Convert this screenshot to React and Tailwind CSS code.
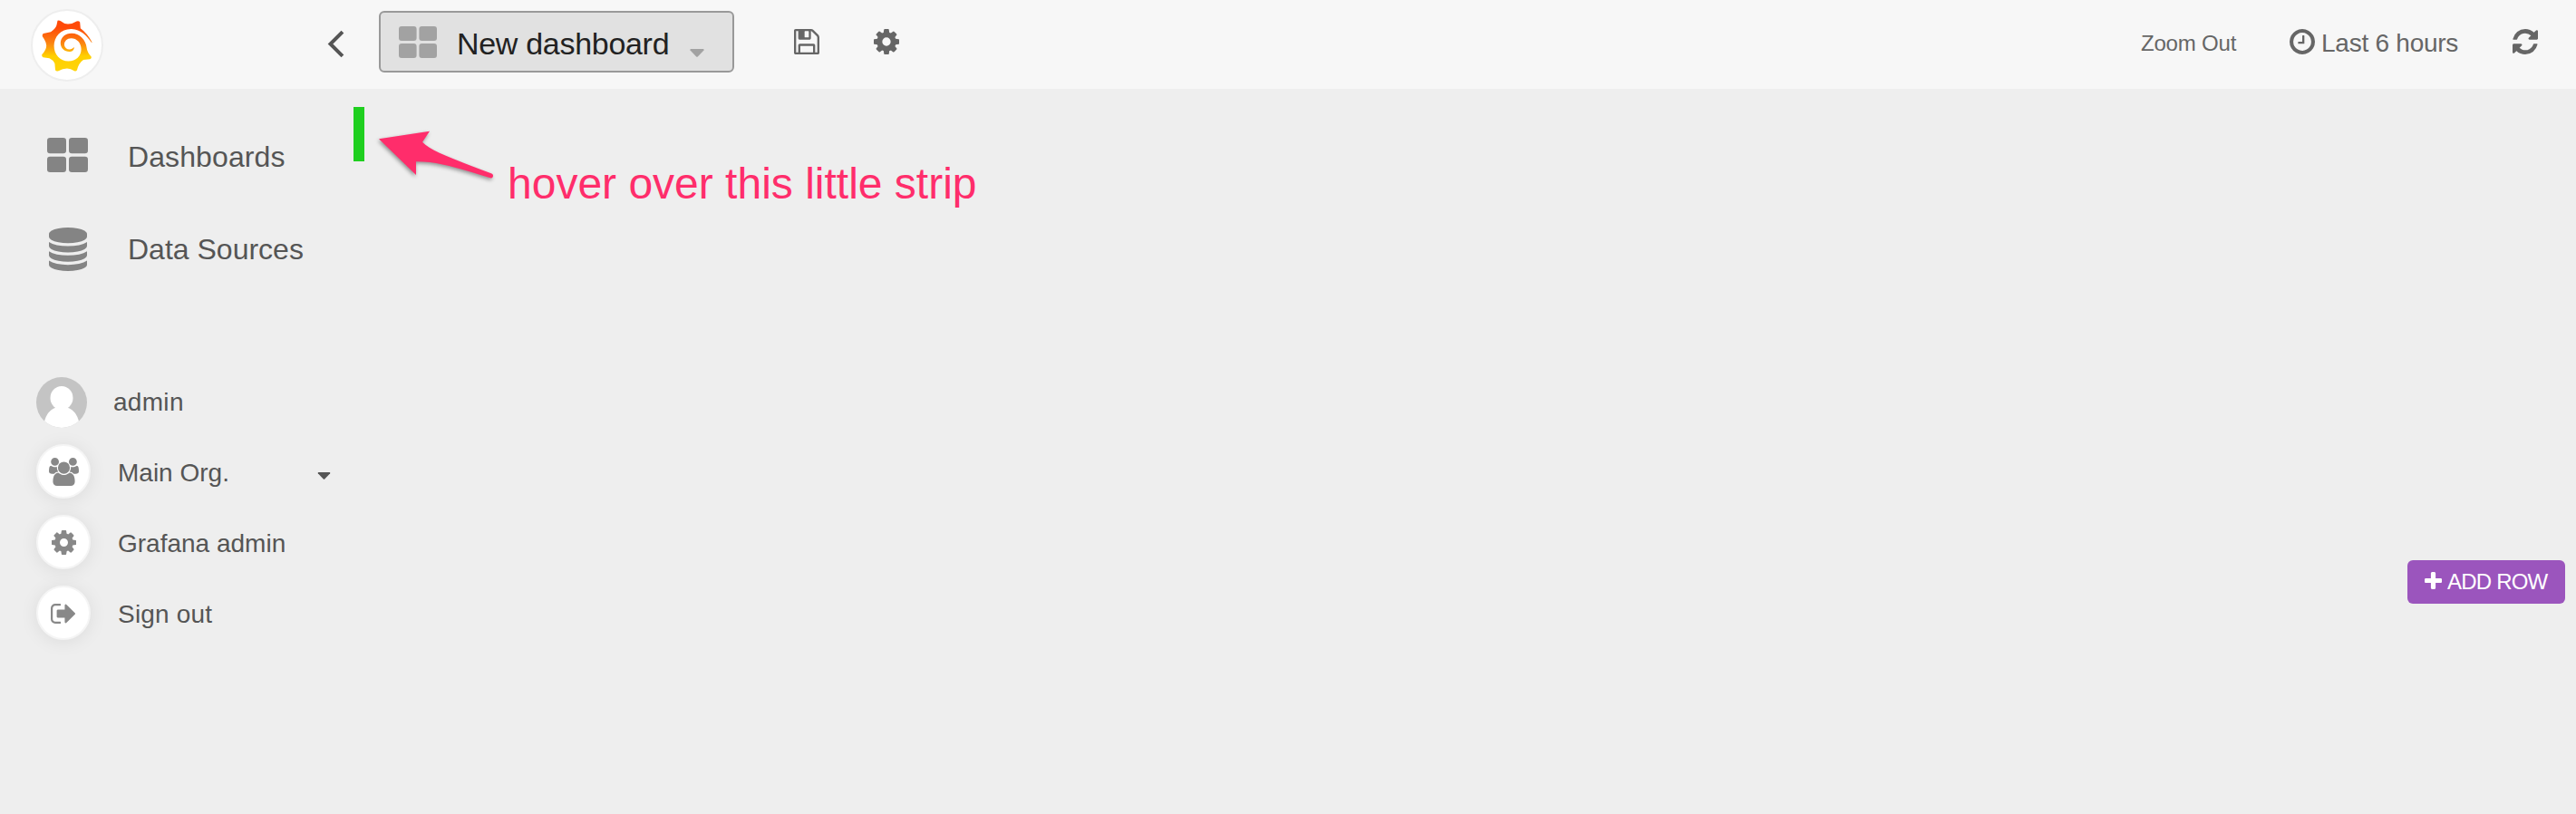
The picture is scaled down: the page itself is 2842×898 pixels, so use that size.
const COG =
  "M1152 896q0-106-75-181t-181-75-181 75-75 181 75 181 181 75 181-75 75-181zm512-109v222q0 12-8 23t-20 13l-185 28q-19 54-39 91 35 50 107 138 10 12 10 25t-9 23q-27 37-99 108t-94 71q-12 0-26-9l-138-108q-44 23-91 38-16 136-29 186-7 28-36 28h-222q-14 0-24.5-8.5t-11.5-21.5l-28-184q-49-16-90-37l-141 107q-10 9-25 9-14 0-25-11-126-114-165-168-7-10-7-23 0-12 8-23 15-21 51-66.5t54-70.5q-27-50-41-99l-183-27q-13-2-21-12.5t-8-23.5v-222q0-12 8-23t19-13l186-28q14-46 39-92-40-57-107-138-10-12-10-24 0-10 9-23 26-36 98.5-107.5t94.5-71.5q13 0 26 10l138 107q44-23 91-38 16-136 29-186 7-28 36-28h222q14 0 24.5 8.5t11.5 21.5l28 184q49 16 90 37l142-107q9-9 24-9 13 0 25 10 129 119 165 170 7 8 7 22 0 12-8 23-15 21-51 66.5t-54 70.5q26 50 41 98l183 28q13 2 21 12.5t8 23.5z";
const FLOPPY =
  "M512 1536h768v-384h-768v384zm896 0h128v-896q0-14-10-38.5t-20-34.5l-281-281q-10-10-34-20t-39-10v416q0 40-28 68t-68 28h-576q-40 0-68-28t-28-68v-416h-128v1280h128v-416q0-40 28-68t68-28h832q40 0 68 28t28 68v416zm-384-928v-320q0-13-9.5-22.5t-22.5-9.5h-192q-13 0-22.5 9.5t-9.5 22.5v320q0 13 9.5 22.5t22.5 9.5h192q13 0 22.5-9.5t9.5-22.5zm640 32v928q0 40-28 68t-68 28h-1344q-40 0-68-28t-28-68v-1344q0-40 28-68t68-28h928q40 0 88 20t76 48l280 280q28 28 48 76t20 88z";
const CLOCK =
  "M1024 544v448q0 14-9 23t-23 9h-320q-14 0-23-9t-9-23v-64q0-14 9-23t23-9h224v-352q0-14 9-23t23-9h64q14 0 23 9t9 23zm416 352q0-148-73-273t-198-198-273-73-273 73-198 198-73 273 73 273 198 198 273 73 273-73 198-198 73-273zm224 0q0 209-103 385.5t-279.5 279.5-385.5 103-385.5-103-279.5-279.5-103-385.5 103-385.5 279.5-279.5 385.5-103 385.5 103 279.5 279.5 103 385.5z";
const REFRESH =
  "M1639 1056q0 5-1 7-64 268-268 434.5t-478 166.5q-146 0-282.5-55t-243.5-157l-129 129q-19 19-45 19t-45-19-19-45v-448q0-26 19-45t45-19h448q26 0 45 19t19 45-19 45l-137 137q71 66 161 102t187 36q134 0 250-65t186-179q11-17 53-117 8-23 30-23h192q13 0 22.5 9.5t9.5 22.5zm25-800v448q0 26-19 45t-45 19h-448q-26 0-45-19t-19-45 19-45l138-138q-148-137-349-137-134 0-250 65t-186 179q-11 17-53 117-8 23-30 23h-199q-13 0-22.5-9.5t-9.5-22.5v-7q65-268 270-434.5t480-166.5q146 0 284 55.5t245 156.5l130-129q19-19 45-19t45 19 19 45z";
const SIGN_OUT =
  "M704 1440q0 4 1 20t.5 26.5-3 23.5-10 19.5-20.5 6.5h-320q-119 0-203.5-84.5t-84.5-203.5v-704q0-119 84.5-203.5t203.5-84.5h320q13 0 22.5 9.5t9.5 22.5q0 4 1 20t.5 26.5-3 23.5-10 19.5-20.5 6.5h-320q-66 0-113 47t-47 113v704q0 66 47 113t113 47h312l11.5 1 11.5 3 8 5.5 7 9 2 13.5zm928-544q0 26-19 45l-544 544q-19 19-45 19t-45-19-19-45v-288h-448q-26 0-45-19t-19-45v-384q0-26 19-45t45-19h448v-288q0-26 19-45t45-19 45 19l544 544q19 19 19 45z";
const PLUS =
  "M1600 736v192q0 40-28 68t-68 28h-416v416q0 40-28 68t-68 28h-192q-40 0-68-28t-28-68v-416h-416q-40 0-68-28t-28-68v-192q0-40 28-68t68-28h416v-416q0-40 28-68t68-28h192q40 0 68 28t28 68v416h416q40 0 68 28t28 68z";
const DATABASE =
  "M896 768q237 0 443-43t325-127v170q0 69-103 128t-280 93.5-385 34.5-385-34.5-280-93.5-103-128v-170q119 84 325 127t443 43zm0 768q237 0 443-43t325-127v170q0 69-103 128t-280 93.5-385 34.5-385-34.5-280-93.5-103-128v-170q119 84 325 127t443 43zm0-384q237 0 443-43t325-127v170q0 69-103 128t-280 93.5-385 34.5-385-34.5-280-93.5-103-128v-170q119 84 325 127t443 43zm0-1152q208 0 385 34.5t280 93.5 103 128v128q0 69-103 128t-280 93.5-385 34.5-385-34.5-280-93.5-103-128v-128q0-69 103-128t280-93.5 385-34.5z";
const USERS =
  "M657 896q-162 5-265 128h-134q-82 0-138-40.5t-56-118.5q0-353 124-353 6 0 43.5 21t97.5 42.5 119 21.5q67 0 133-23-5 37-5 66 0 139 81 256zm1071 637q0 120-73 189.5t-194 69.5h-874q-121 0-194-69.5t-73-189.5q0-53 3.5-103.5t14-109 26.5-108.5 43-97.5 62-81 85.5-53.5 111.5-20q10 0 43 21.5t73 48 107 48 135 21.5 135-21.5 107-48 73-48 43-21.5q61 0 111.5 20t85.5 53.5 62 81 43 97.5 26.5 108.5 14 109 3.5 103.5zm-1024-1277q0 106-75 181t-181 75-181-75-75-181 75-181 181-75 181 75 75 181zm704 384q0 159-112.5 271.5t-271.5 112.5-271.5-112.5-112.5-271.5 112.5-271.5 271.5-112.5 271.5 112.5 112.5 271.5zm576 225q0 78-56 118.5t-138 40.5h-134q-103-123-265-128 81-117 81-256 0-29-5-66 66 23 133 23 59 0 119-21.5t97.5-42.5 43.5-21q124 0 124 353zm-128-609q0 106-75 181t-181 75-181-75-75-181 75-181 181-75 181 75 75 181z";

function Icon({ d, box = "128 128 1536 1536", className }) {
  return (
    <svg viewBox={box} preserveAspectRatio="none" fill="currentColor" className={"shrink-0 " + className}>
      <path d={d} />
    </svg>
  );
}

function Tiles({ className }) {
  return (
    <svg viewBox="0 0 45 38" preserveAspectRatio="none" fill="currentColor" className={"shrink-0 " + className}>
      <rect x="0" y="0" width="21" height="17.3" rx="3.2" />
      <rect x="24" y="0" width="21" height="17.3" rx="3.2" />
      <rect x="0" y="20.7" width="21" height="17.3" rx="3.2" />
      <rect x="24" y="20.7" width="21" height="17.3" rx="3.2" />
    </svg>
  );
}

function Logo() {
  return (
    <div className="flex size-[80px] shrink-0 items-center justify-center rounded-full border-2 border-[#eeeeee] bg-white">
      <svg viewBox="0 0 56 57" className="h-[57px] w-[56px]" fill="none">
        <defs>
          <linearGradient id="flame" x1="0" y1="0" x2="0" y2="57" gradientUnits="userSpaceOnUse">
            <stop offset="0.15" stopColor="#ff4a08" />
            <stop offset="0.45" stopColor="#fb8412" />
            <stop offset="0.7" stopColor="#ffd000" />
            <stop offset="1" stopColor="#ffd40a" />
          </linearGradient>
        </defs>
        <path
          fill="url(#flame)"
          d="M17.500 .8Q19 0 21 1.200Q25 4.600 29 4.600Q34 4.400 38.500 1.500Q41 .6 42.200 2.500L42.800 9.300Q50.500 15 55.500 24.500Q55.400 25.500 54.600 24.600C50 17.500 43 10.600 33 10C21.500 9.600 13.600 18.500 13.600 28.500C13.600 38.500 20.500 45.600 29.500 45.600C38 45.600 43.600 40 43.600 32.300C43.600 25 38.500 20.200 32.600 20.200C27.500 20.200 24.500 24 25 28C25.500 31.300 29 33.300 32 32.300C34.500 31.600 35 30.600 35.600 29.700C36.300 33 33.500 35 30.500 35C25 35 20.800 31 20.800 25.500C20.800 19.500 26 14.800 33 14.800C42 14.800 48.600 22 49.600 30.500Q50 35.500 54.800 40.800Q55 42.600 53.200 43.300L46 44Q40.800 47.500 39 55.300Q38 57 36 56.300Q32 53.500 28 53.500Q23 53.500 18.500 56.300Q16 57.200 15 55.200L14.400 48Q12.500 44 8.500 42.200L1.500 41.200Q-.3 40 .4 38Q5 33 5.200 28.500Q5 24 1 18.500Q.2 16.300 1.800 15L10 13.200Q15 10 16.400 6Z"
        />
      </svg>
    </div>
  );
}

function Arrow() {
  return (
    <svg viewBox="0 0 140 62" className="absolute top-[142px] left-[410px] h-[62px] w-[140px] drop-shadow-[-1px_2px_2px_rgba(0,0,0,0.4)]">
      <path
        fill="#ff2d6b"
        d="M8 11.300L64 2.700L56 14.700C66 25 92 34 132.500 49.500Q135 51 133.500 53.500Q132.500 55 130 54C100 45 74 36 49 36.300L49 51Z"
      />
    </svg>
  );
}

function Round({ children }) {
  return (
    <span className="flex size-[60px] shrink-0 items-center justify-center rounded-full border-2 border-[#f5f5f5] bg-white text-[#888888] shadow-[0_2px_20px_rgba(0,0,0,0.08)]">
      {children}
    </span>
  );
}

function UserRow({ icon, label, children }) {
  return (
    <li className="flex h-[78px] items-start">
      <Round>{icon}</Round>
      <span className="mt-[12px] ml-[30px] leading-[40px]">{label}</span>
      {children}
    </li>
  );
}

export default function App() {
  return (
    <div className="relative flex h-[898px] w-[2842px] flex-col overflow-hidden bg-[#eeeeee] font-['Liberation_Sans',Arial,sans-serif] text-[#555555]">
      <header className="flex h-[98px] shrink-0 items-start bg-[#f7f7f7] text-[#666666]">
        <div className="flex w-[418px] shrink-0 items-start pt-[10px] pl-[34px]">
          <Logo />
          <svg viewBox="0 0 20 32" className="mt-[22px] ml-[246px] h-[32px] w-[20px]" fill="none" stroke="#555555" strokeWidth="4" strokeLinecap="square">
            <path d="M16.500 4.500L4.500 16.500L16.500 28.500" />
          </svg>
        </div>
        <button className="mt-[12px] flex h-[68px] w-[392px] shrink-0 items-start rounded-[6px] border-2 border-[#999999] bg-[#e1e1e1] text-[#222222]">
          <Tiles className="mt-[15px] ml-[20px] h-[35px] w-[42px] text-[#a2a2a2]" />
          <span className="mt-[14px] ml-[22px] w-[238px] text-left text-[34px] leading-[40px] tracking-[-0.3px] whitespace-nowrap">New dashboard</span>
          <svg viewBox="0 0 16 9" className="mt-[40px] ml-[19px] h-[9px] w-[16px]" fill="#a2a2a2">
            <path d="M1 0H15Q16 .5 15.500 1.500L8.800 8.400Q8 9 7.200 8.400L.5 1.500Q0 .5 1 0Z" />
          </svg>
        </button>
        <Icon d={FLOPPY} className="mt-[32px] ml-[66px] size-[28px]" />
        <Icon d={COG} className="mt-[32px] ml-[60px] size-[28px]" />
        <div className="ml-auto flex items-start whitespace-nowrap">
          <span className="mt-[28px] w-[164px] text-[24px] leading-[40px] tracking-[-0.2px]">Zoom Out</span>
          <Icon d={CLOCK} className="mt-[32px] size-[28px]" />
          <span className="mt-[28px] ml-[7px] w-[211px] text-[28px] leading-[40px] tracking-[-0.25px]">Last 6 hours</span>
          <Icon d={REFRESH} className="mt-[32px] mr-[42px] size-[28px]" />
        </div>
      </header>

      <div className="flex flex-1 items-start">
        <aside className="w-[390px] shrink-0">
          <nav className="flex flex-col pt-[53px] text-[32px] whitespace-nowrap">
            <a className="flex h-[102px] items-start">
              <Tiles className="mt-[1px] ml-[52px] h-[38px] w-[45px] text-[#848484]" />
              <span className="mt-[2px] ml-[44px] leading-[40px] tracking-[0.1px]">Dashboards</span>
            </a>
            <a className="flex h-[102px] items-start">
              <Icon d={DATABASE} box="128 0 1536 1792" className="mt-[-2px] ml-[54px] h-[48px] w-[42px] text-[#848484]" />
              <span className="mt-[2px] ml-[45px] leading-[40px]">Data Sources</span>
            </a>
          </nav>
          <ul className="mt-[61px] ml-[40px] text-[28px] whitespace-nowrap">
            <li className="flex h-[74px] items-start">
              <svg viewBox="0 0 56 56" className="size-[56px] shrink-0 rounded-full bg-[#c4c4c4]" fill="#ffffff">
                <ellipse cx="28" cy="23" rx="12.500" ry="13" />
                <path d="M8 56Q9 38 22 33.500H34Q47 38 48 56Z" />
              </svg>
              <span className="mt-[8px] ml-[29px] leading-[40px] tracking-[0.3px]">admin</span>
            </li>
            <UserRow icon={<Icon d={USERS} box="64 0 1920 1792" className="h-[31px] w-[33px]" />} label="Main Org.">
              <svg viewBox="0 0 16 9" className="mt-[31px] mr-[25px] ml-auto h-[8px] w-[15px]" fill="#555555">
                <path d="M1 0H15Q16 .5 15.500 1.500L8.800 8.400Q8 9 7.200 8.400L.5 1.500Q0 .5 1 0Z" />
              </svg>
            </UserRow>
            <UserRow icon={<Icon d={COG} className="size-[27px]" />} label="Grafana admin" />
            <UserRow icon={<Icon d={SIGN_OUT} box="64 256 1568 1280" className="mt-[2px] mr-[2px] h-[22px] w-[27px]" />} label={<span className="tracking-[0.2px]">Sign out</span>} />
          </ul>
        </aside>
        <span className="mt-[20px] h-[60px] w-[12px] shrink-0 bg-[#1fcf1f]" />
        <p className="mt-[78px] ml-[158px] text-[48px] leading-[54px] whitespace-nowrap text-[#ff2d6b]">hover over this little strip</p>
        <button className="mt-[520px] mr-[12px] ml-auto flex h-[48px] w-[174px] shrink-0 items-start rounded-[6px] bg-[#9b55bd] text-white">
          <Icon d={PLUS} box="192 128 1408 1408" className="mt-[13px] ml-[19px] size-[19px]" />
          <span className="mt-[4px] ml-[6px] text-[24px] leading-[40px] tracking-[-0.8px] whitespace-nowrap">ADD ROW</span>
        </button>
      </div>
      <Arrow />
    </div>
  );
}
